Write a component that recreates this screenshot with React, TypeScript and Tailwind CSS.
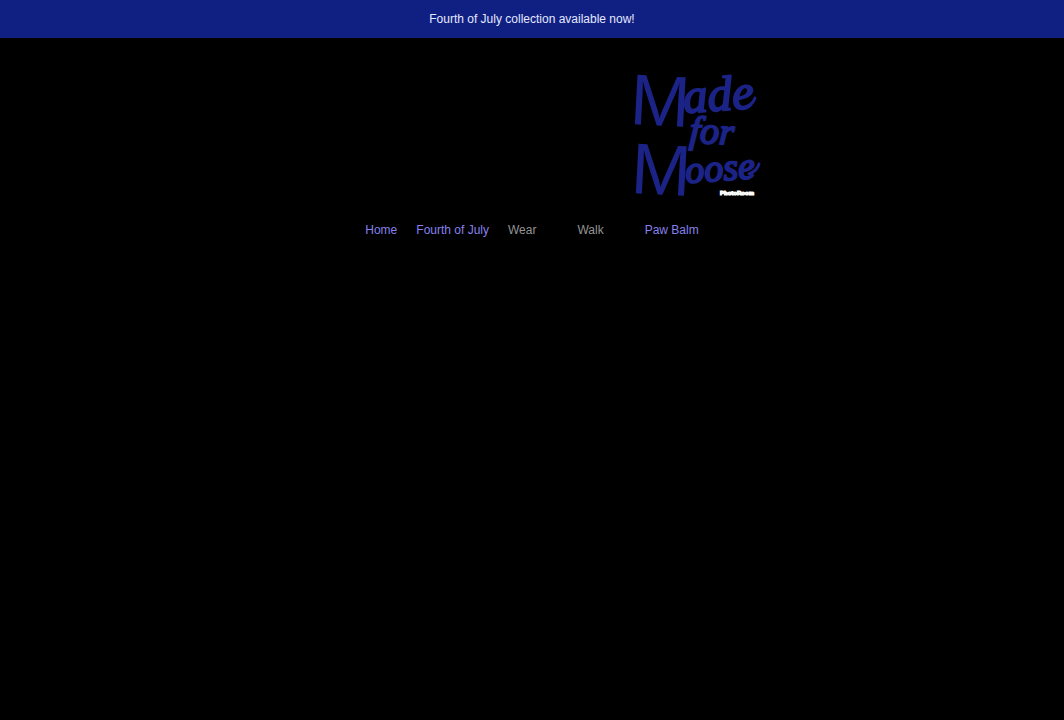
import React from "react";

const linkStyle = "text-[#8780ee] hover:underline";
const menuStyle = "flex items-center gap-3 text-[#949494] hover:underline";

function Logo() {
  return (
    <svg viewBox="0 0 134 138" className="h-[138px] w-[134px] overflow-visible" role="img" aria-label="Made for Moose">
      <g fill="#1c2386" stroke="#1c2386" strokeLinejoin="round">
        <g fontFamily="'Liberation Sans Narrow', 'Liberation Sans', sans-serif" fontSize="72" strokeWidth="0">
          <text x="-1" y="62" transform="rotate(3 0 62)">M</text>
          <text x="0" y="131" transform="rotate(3 0 131)">M</text>
        </g>
        <g fontFamily="'Liberation Serif', serif" fontStyle="italic" strokeWidth="2">
          <text x="54" y="51" fontSize="49" transform="rotate(-4 54 51)">ade</text>
          <text x="59" y="80" fontSize="38" transform="rotate(4 59 80)">for</text>
          <text x="56" y="121" fontSize="38" transform="rotate(-4 56 121)">oose</text>
        </g>
        <path
          d="M116 45q7-3 9-9M119 112q8-3 10-10"
          fill="none"
          strokeWidth="3"
          strokeLinecap="round"
        />
      </g>
      <text x="90" y="133" fontSize="6" fontWeight="700" fill="#fff" stroke="#fff" strokeWidth="1" fontFamily="'Liberation Sans', sans-serif">PhotoRoom</text>
    </svg>
  );
}

function Chevron() {
  return (
    <svg viewBox="0 0 10 6" className="w-[10px]" fill="none" stroke="#000" aria-hidden="true">
      <path d="M1 1l4 4 4-4" />
    </svg>
  );
}

export default function App() {
  return (
    <div className="min-h-screen bg-black font-['Liberation_Sans',Arial,sans-serif] text-xs">
      <p className="flex h-[38px] items-center justify-center bg-[#102082] text-[#e4e8ff]">
        Fourth of July collection available now!
      </p>
      <header className="flex flex-col items-center">
        <a href="#" className="ml-[330px] mt-6">
          <Logo />
        </a>
        <nav className="mt-[22px]">
          <ul className="flex items-center gap-[19px]">
            <li><a href="#" className={linkStyle}>Home</a></li>
            <li><a href="#" className={linkStyle}>Fourth of July</a></li>
            <li><button type="button" className={menuStyle}>Wear<Chevron /></button></li>
            <li><button type="button" className={menuStyle}>Walk<Chevron /></button></li>
            <li><a href="#" className={linkStyle}>Paw Balm</a></li>
          </ul>
        </nav>
      </header>
    </div>
  );
}
